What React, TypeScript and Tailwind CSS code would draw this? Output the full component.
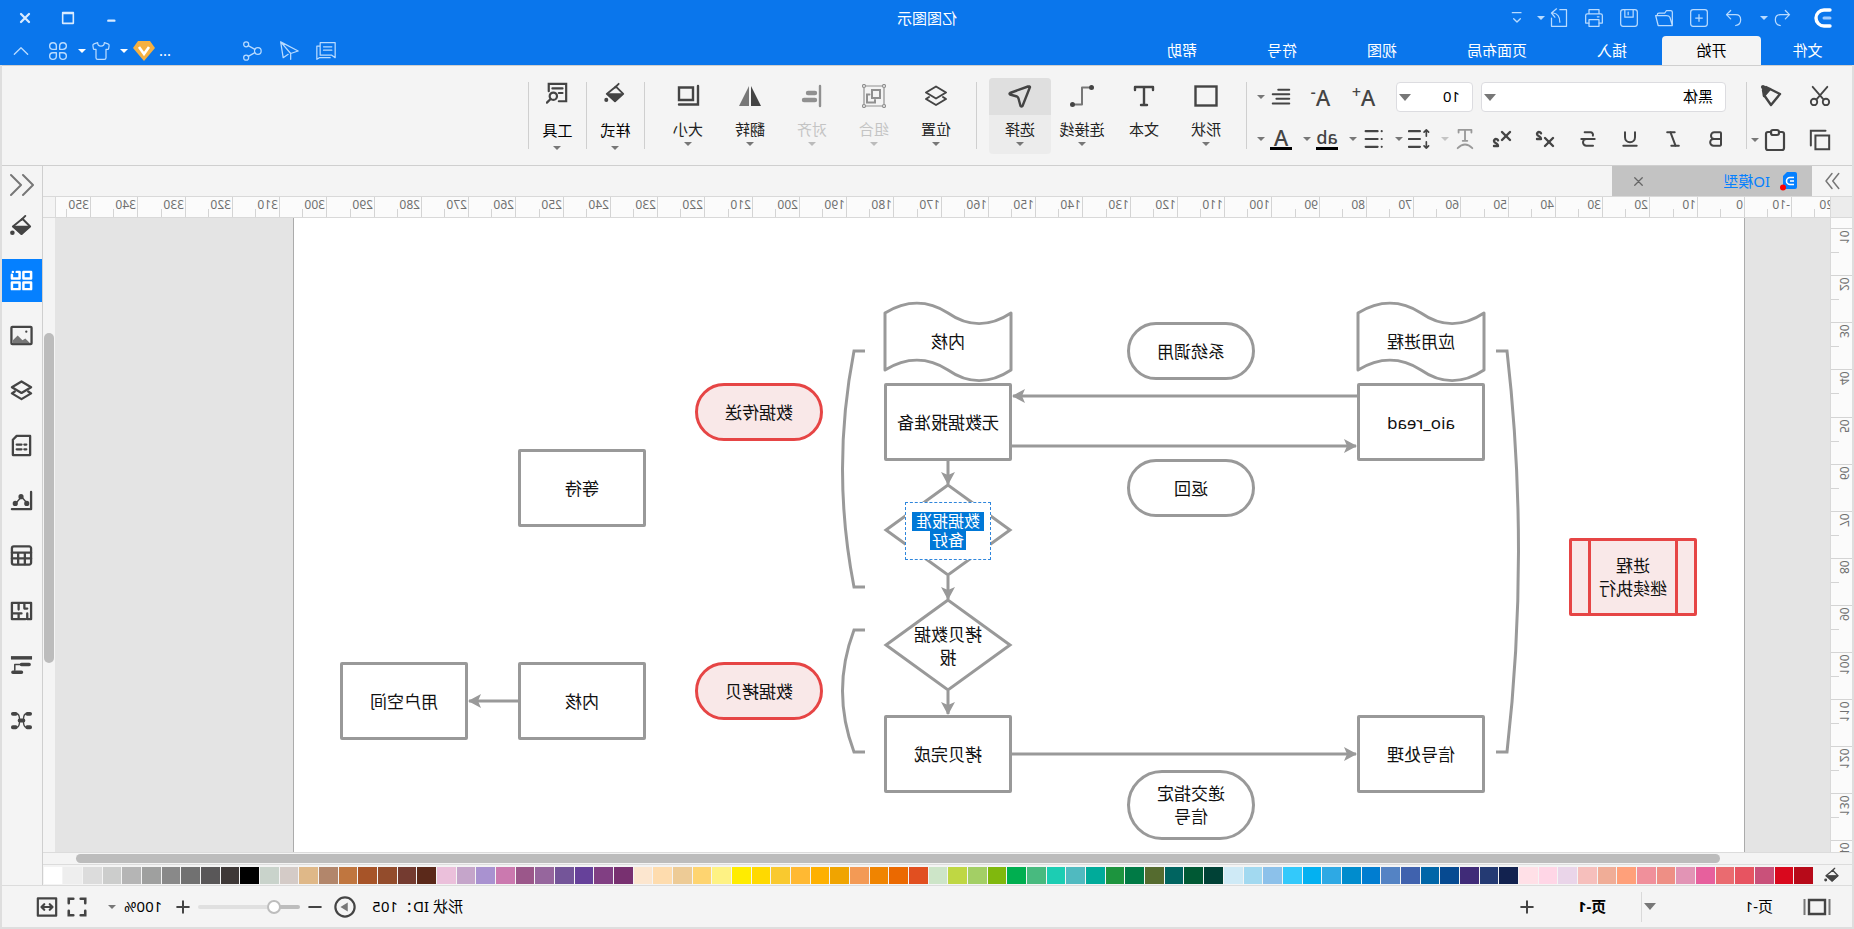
import type { ReactNode } from 'react';
import { Bold, Italic, Shirt, Strikethrough, Subscript, Superscript, Underline } from 'lucide-react';
import clsx from 'clsx';

interface IconProps {
  children: ReactNode;
  className?: string;
  stroke?: number;
}

const Icon = ({ children, className = 'h-6 w-6', stroke = 2 }: IconProps) => (
  <svg
    viewBox="0 0 24 24"
    className={clsx('shrink-0', className)}
    fill="none"
    stroke="currentColor"
    strokeWidth={stroke}
    strokeLinecap="round"
    strokeLinejoin="round"
    aria-hidden
  >
    {children}
  </svg>
);

const Caret = ({ className = 'h-1 w-2' }: { className?: string }) => (
  <svg viewBox="0 0 8 4" className={clsx('shrink-0', className)} preserveAspectRatio="none" aria-hidden>
    <path d="M0 0h8L4 4z" fill="currentColor" />
  </svg>
);

const Separator = () => <div className="h-[67px] w-px bg-[#cfcfcf]" />;

const bucket = (
  <>
    <path d="m11 5-8 8 9 8 9-8z" strokeWidth="2" />
    <path d="M4 13h16l-8 8z" fill="currentColor" strokeWidth="1.500" />
    <path d="m12 6-4-4" strokeWidth="2" />
    <circle cx="21.500" cy="19.500" r="1.200" fill="currentColor" />
  </>
);

const layers = (
  <>
    <path d="M12 2.500 22 8.500l-10 6-10-6z" />
    <path d="m5 13-3 2 10 6 10-6-3-2" />
  </>
);

const Header = () => {
  const quickActions = [
    {
      label: '新建',
      icon: (
        <>
          <rect x="2" y="2" width="20" height="20" rx="3" />
          <path d="M12 8v8M8 12h8" />
        </>
      )
    },
    {
      label: '打开',
      icon: <path d="M2 21V5q0-2 2-2h5l2 3h7q2 0 2 2v1M2 21h17l3-12H9q-3 0-4 2z" />
    },
    {
      label: '保存',
      icon: (
        <>
          <rect x="2" y="2" width="20" height="20" rx="3" />
          <path d="M7 2v9h10V2M13 5v3" />
        </>
      )
    },
    {
      label: '打印',
      icon: (
        <>
          <path d="M6 7V2h12v5M6 18H2V9q0-2 2-2h16q2 0 2 2v9h-4" />
          <path d="M6 14h12v8H6zM6 10.500h2" />
        </>
      )
    },
    {
      label: '导出',
      icon: <path d="M11 2H3v20h18V12M11 17q0-10 8-11M15 1l6 5-4 5" />
    }
  ];

  const tabs = ['插入', '页面布局', '视图', '符号', '帮助'];

  return (
    <header className="bg-[#0a76ec] text-white">
      <div className="grid h-9 grid-cols-[1fr_auto_1fr] items-center">
        <div className="flex items-center pl-[22px] text-[#b9dbff]">
          <svg viewBox="0 0 18 20" className="h-5 w-[18px]" fill="none" stroke="white" strokeLinecap="round" aria-hidden>
            <path d="M2 2h6a8 8 0 0 1 0 16H2" strokeWidth="3.400" />
            <path d="M2 10h6" strokeWidth="3" stroke="#9fcbff" />
          </svg>
          <button type="button" aria-label="撤销" className="ml-[22px]">
            <Icon className="h-5 w-5" stroke={1.5}>
              <path d="m8 3-5 5 5 5M3 8h11q6 0 6 6t-6 7" />
            </Icon>
          </button>
          <button type="button" aria-label="撤销记录" className="ml-1">
            <Caret />
          </button>
          <button type="button" aria-label="恢复" className="ml-4">
            <Icon className="h-5 w-5" stroke={1.5}>
              <path d="m16 3 5 5-5 5M21 8H10q-6 0-6 6t6 7" />
            </Icon>
          </button>
          {quickActions.map((action) => (
            <button key={action.label} type="button" aria-label={action.label} className="ml-[15px]">
              <Icon className="h-5 w-5" stroke={1.5}>
                {action.icon}
              </Icon>
            </button>
          ))}
          <button type="button" aria-label="导出选项" className="ml-1">
            <Caret />
          </button>
          <button type="button" aria-label="自定义工具栏" className="ml-3">
            <Icon className="h-4 w-4">
              <path d="M6 4h13M7 13l5 5 5-5" />
            </Icon>
          </button>
        </div>
        <h1 className="text-[15px]">亿图图示</h1>
        <div className="flex justify-end pr-1 text-[#d9ebff]">
          <button type="button" aria-label="最小化" className="flex w-[43px] justify-center">
            <Icon className="h-4 w-4" stroke={3.6}>
              <path d="M7 16h9" />
            </Icon>
          </button>
          <button type="button" aria-label="最大化" className="flex w-[43px] justify-center">
            <Icon className="h-4 w-4" stroke={2.4}>
              <path d="M4 4h16v16H4zM4 5h16" />
            </Icon>
          </button>
          <button type="button" aria-label="关闭" className="flex w-[43px] justify-center">
            <Icon className="h-4 w-4" stroke={3.4}>
              <path d="m6 6 12 12M18 6 6 18" />
            </Icon>
          </button>
        </div>
      </div>

      <div className="flex h-[29px] items-center justify-between">
        <nav className="flex h-full text-[15px]">
          <button type="button" className="w-[93px]">
            文件
          </button>
          <button type="button" className="w-[99px] rounded-t-sm bg-[#f4f4f4] text-black">
            开始
          </button>
          {tabs.map((tab) => (
            <button key={tab} type="button" className="px-[35px]">
              {tab}
            </button>
          ))}
        </nav>
        <div className="flex items-center pr-[13px] text-[#b9dbff]">
          <button type="button" aria-label="评论">
            <Icon className="h-5 w-5" stroke={1.5}>
              <path d="M1 2h18v15H5l-4 3zM19 6h4v16l-3-2H7M5 7h10M5 11h10" />
            </Icon>
          </button>
          <button type="button" aria-label="发送" className="ml-[17px]">
            <Icon className="h-5 w-5" stroke={1.5}>
              <path d="M22 1 1 12l9 3v7M22 1l-3 19-6-4M22 1 10 15" />
            </Icon>
          </button>
          <button type="button" aria-label="分享" className="ml-[17px]">
            <Icon className="h-5 w-5" stroke={1.5}>
              <circle cx="5" cy="12" r="4" />
              <circle cx="19" cy="4" r="3" />
              <circle cx="19" cy="20" r="3" />
              <path d="m8.500 10 8-4.500M8.500 14l8 4.500" />
            </Icon>
          </button>
          <span className="ml-[71px] w-3 text-[15px] text-white">...</span>
          <svg viewBox="0 0 22 20" className="ml-1 h-5 w-[22px]" aria-hidden>
            <path d="M5 0h12l5 7-11 13L0 7z" fill="#f5b041" />
            <path d="m6 6 5 7 5-7" fill="none" stroke="white" strokeWidth="2.600" />
          </svg>
          <button type="button" aria-label="会员选项" className="ml-[5px] text-white">
            <Caret />
          </button>
          <button type="button" aria-label="主题" className="ml-[9px]">
            <Shirt className="h-5 w-5" strokeWidth={1.5} aria-hidden />
          </button>
          <button type="button" aria-label="主题选项" className="ml-[5px] text-white">
            <Caret />
          </button>
          <button type="button" aria-label="应用" className="ml-[10px]">
            <Icon className="h-5 w-5" stroke={1.7}>
              <path d="M10 10H6a4 4 0 1 1 4-4zM14 10h4a4 4 0 1 0-4-4zM10 14H6a4 4 0 1 0 4 4zM14 14h4a4 4 0 1 1-4 4z" />
            </Icon>
          </button>
          <button type="button" aria-label="收起功能区" className="ml-[19px]">
            <Icon className="h-4 w-4">
              <path d="m2 17 10-10 10 10" />
            </Icon>
          </button>
        </div>
      </div>
    </header>
  );
};

interface BigTool {
  label: string;
  icon: ReactNode;
  caret?: boolean;
  active?: boolean;
  disabled?: boolean;
}

const drawTools: BigTool[] = [
  {
    label: '形状',
    caret: true,
    icon: <rect x="1.500" y="2.500" width="21" height="19" strokeLinejoin="miter" strokeWidth="2.400" />
  },
  { label: '文本', icon: <path d="M3 6V3h18v3M12 3v18M9 21h6" strokeWidth="2.400" /> },
  {
    label: '连接线',
    caret: true,
    icon: (
      <>
        <path d="M5 3.500h7v17h7" stroke="#777" />
        <circle cx="2.500" cy="3.500" r="2.500" fill="currentColor" stroke="none" />
        <circle cx="21.500" cy="20.500" r="2.500" fill="currentColor" stroke="none" />
      </>
    )
  },
  {
    label: '选择',
    caret: true,
    active: true,
    icon: (
      <path d="M2 3q0-1 2-.5L22 9q1 .5 0 1.500l-7 2q-1 .5-1.500 2l-2 7.500q-1 1-2 0z" strokeWidth="2.400" />
    )
  }
];

const arrangeTools: BigTool[] = [
  { label: '位置', caret: true, icon: layers },
  {
    label: '组合',
    caret: true,
    disabled: true,
    icon: (
      <>
        <path d="M2 2h20v20H2z" strokeWidth="1.200" />
        <path d="M6 6h8v8H6zM16.500 10.500H19v8h-8V16" strokeLinejoin="miter" />
        <g fill="#f4f4f4" strokeWidth="1.200">
          <circle cx="2" cy="2" r="1.500" />
          <circle cx="22" cy="2" r="1.500" />
          <circle cx="2" cy="22" r="1.500" />
          <circle cx="22" cy="22" r="1.500" />
        </g>
      </>
    )
  },
  {
    label: '对齐',
    caret: true,
    disabled: true,
    icon: (
      <>
        <path d="M4 2v20" strokeWidth="2.400" />
        <path d="M9 9h7M9 16h11" strokeWidth="4.400" />
      </>
    )
  },
  {
    label: '翻转',
    caret: true,
    icon: (
      <>
        <path d="M11 2v20H1z" fill="currentColor" stroke="none" />
        <path d="M13 2v20h10z" fill="#777" stroke="none" />
      </>
    )
  },
  {
    label: '大小',
    caret: true,
    icon: <path d="M2 2v18.500h19M7 3.500h14v12.500H7z" strokeLinejoin="miter" strokeWidth="2.400" />
  }
];

const BigButton = ({ tool }: { tool: BigTool }) => (
  <button
    type="button"
    disabled={tool.disabled}
    className={clsx(
      'flex h-[76px] w-[62px] flex-col items-center rounded-sm text-[15px] text-[#222] disabled:text-[#c4c4c4]',
      tool.active && 'bg-[#ececec]'
    )}
  >
    <span
      className={clsx(
        'flex h-[37px] w-full shrink-0 items-center justify-center rounded-t-sm',
        tool.active && 'bg-[#dfdfdf]',
        tool.disabled ? 'text-[#909090]' : 'text-[#444]'
      )}
    >
      <Icon>{tool.icon}</Icon>
    </span>
    <span className="pt-[2px] leading-6">{tool.label}</span>
    {tool.caret && <Caret className={clsx('mt-px h-1 w-2', tool.disabled ? 'text-[#bbb]' : 'text-[#777]')} />}
  </button>
);

const Combo = ({ label, children, disabled }: { label: string; children: ReactNode; disabled?: boolean }) => (
  <button
    type="button"
    aria-label={label}
    disabled={disabled}
    className="flex w-[46px] shrink-0 items-center gap-1 disabled:text-[#999]"
  >
    <span className="flex w-6 justify-center">{children}</span>
    <Caret className={clsx('h-1 w-2', disabled ? 'text-[#c4c4c4]' : 'text-[#777]')} />
  </button>
);

const Ribbon = () => {
  const textStyles = [
    { label: '加粗', Glyph: Bold, size: 'h-5 w-5' },
    { label: '斜体', Glyph: Italic, size: 'h-5 w-5' },
    { label: '下划线', Glyph: Underline, size: 'h-5 w-5' },
    { label: '删除线', Glyph: Strikethrough, size: 'h-5 w-5' },
    { label: '上标', Glyph: Superscript, size: 'h-6 w-6' },
    { label: '下标', Glyph: Subscript, size: 'h-6 w-6' }
  ];

  return (
    <section
      aria-label="开始"
      className="flex h-[101px] shrink-0 items-center border-y border-[#cfcfcf] text-[#444]"
    >
      <div className="ml-[7px] grid w-[98px] grid-cols-2 items-center gap-y-5 pt-1">
        <button type="button" aria-label="剪切" className="flex justify-center">
          <Icon className="h-[22px] w-[22px]">
            <path d="m4 2 12 14M20 2 8 16" />
            <circle cx="5.500" cy="18.500" r="3.500" />
            <circle cx="18.500" cy="18.500" r="3.500" />
          </Icon>
        </button>
        <button type="button" aria-label="格式刷" className="flex justify-center">
          <Icon className="h-6 w-6" stroke={2.4}>
            <path d="M3 10 13 5l6 6-7 10z" />
            <path d="m13 5 4-2 3 3-1 6z" fill="currentColor" />
            <path d="m18 5 2-2" strokeWidth="4" />
          </Icon>
        </button>
        <button type="button" aria-label="复制" className="flex justify-center">
          <Icon className="h-[22px] w-[22px]" stroke={2.2}>
            <path d="M2 7h15v15H2zM6 2h16v16" strokeLinejoin="miter" />
          </Icon>
        </button>
        <button type="button" aria-label="粘贴" className="flex items-center gap-1 pl-[9px]">
          <Icon className="h-6 w-6" stroke={2.2}>
            <path d="M8 4H5q-2 0-2 2v14q0 2 2 2h14q2 0 2-2V6q0-2-2-2h-3" />
            <rect x="8" y="2" width="8" height="5" rx="2" />
          </Icon>
          <Caret className="h-1 w-2 text-[#777]" />
        </button>
      </div>
      <Separator />

      <div className="flex w-[499px] flex-col gap-3 pt-1">
        <div className="flex h-[30px] items-center pl-5">
          <div className="relative">
            <select
              aria-label="字体"
              className="block h-[30px] w-[245px] appearance-none rounded-sm border border-[#dcdce0] bg-white pl-3 text-[15px] text-black"
            >
              <option>黑体</option>
            </select>
            <Caret className="pointer-events-none absolute top-3 right-[3px] h-[7px] w-3 text-[#777]" />
          </div>
          <div className="relative ml-2">
            <select
              aria-label="字号"
              className="block h-[30px] w-[77px] appearance-none rounded-sm border border-[#dcdce0] bg-white pl-3 text-[15px] text-black"
            >
              <option>10</option>
            </select>
            <Caret className="pointer-events-none absolute top-3 right-[3px] h-[7px] w-3 text-[#777]" />
          </div>
          <button type="button" aria-label="增大字号" className="ml-[11px] flex w-11 justify-center text-[22px] leading-[30px] font-medium">
            A<span className="text-base leading-5">+</span>
          </button>
          <button type="button" aria-label="减小字号" className="mr-[6px] flex w-11 justify-center text-[22px] leading-[30px] font-medium">
            A<span className="text-base leading-5">-</span>
          </button>
          <Combo label="对齐方式">
            <Icon className="h-[22px] w-[22px]" stroke={2.2}>
              <path d="M3 4h12M3 9h18M3 14h14M3 19h18" />
            </Icon>
          </Combo>
        </div>

        <div className="flex h-[30px] items-center pl-[9px]">
          {textStyles.map(({ label, Glyph, size }) => (
            <button key={label} type="button" aria-label={label} className="flex w-[43px] justify-center">
              <Glyph className={size} strokeWidth={2.4} aria-hidden />
            </button>
          ))}
          <div className="ml-1 flex items-center">
            <Combo label="清除格式" disabled>
              <Icon className="h-[22px] w-[22px]">
                <path d="M5 5V2h14v3M12 2v12M9.500 14h5M4 22q8-8 16 0" />
              </Icon>
            </Combo>
            <Combo label="行距">
              <Icon className="h-[22px] w-[22px]">
                <path d="M11 3.500h12M11 12h12M11 20.500h12" strokeWidth="2.400" />
                <path d="M4 2v7M1.500 4.500 4 2l2.500 2.500M4 15v7M1.500 19.500 4 22l2.500-2.500" strokeWidth="1.800" />
              </Icon>
            </Combo>
            <Combo label="项目符号">
              <Icon className="h-[22px] w-[22px]" stroke={2.4}>
                <path d="M7 3.500h13M7 12h13M7 20.500h13M2.500 3.500v0M2.500 12v0M2.500 20.500v0" />
              </Icon>
            </Combo>
            <Combo label="突出显示">
              <span className="flex w-[22px] justify-center border-b-3 border-black text-lg leading-5 font-medium">
                ab
              </span>
            </Combo>
            <Combo label="字体颜色">
              <span className="flex w-[22px] justify-center border-b-3 border-black text-[22px] leading-5 font-medium">
                A
              </span>
            </Combo>
          </div>
        </div>
      </div>
      <Separator />

      <div className="flex pr-3 pl-[9px]">
        {drawTools.map((tool) => (
          <BigButton key={tool.label} tool={tool} />
        ))}
      </div>
      <Separator />
      <div className="flex pr-3 pl-[9px]">
        {arrangeTools.map((tool) => (
          <BigButton key={tool.label} tool={tool} />
        ))}
      </div>
      <Separator />
      <button type="button" className="flex w-[57px] flex-col items-center text-[15px] text-black">
        <Icon className="h-[22px] w-[22px] text-[#444]">{bucket}</Icon>
        <span className="pt-[14px] leading-6">样式</span>
        <Caret className="mt-1 h-1 w-2 text-[#777]" />
      </button>
      <Separator />
      <button type="button" className="flex w-[57px] flex-col items-center text-[15px] text-black">
        <Icon className="h-[22px] w-[22px] text-[#444]" stroke={2.4}>
          <path d="M10 21H2V2h19v8M6 7h11M6 12h4" strokeLinejoin="miter" />
          <circle cx="16" cy="15.500" r="4" />
          <path d="m19 18.500 4 4" />
        </Icon>
        <span className="pt-[14px] leading-6">工具</span>
        <Caret className="mt-1 h-1 w-2 text-[#777]" />
      </button>
      <Separator />
    </section>
  );
};

const DocumentTabs = () => (
  <div className="flex h-[30px] shrink-0 items-center">
    <button type="button" aria-label="展开符号库" className="flex w-10 justify-center text-[#777]">
      <Icon className="h-[18px] w-[18px]">
        <path d="m3 2 8 10-8 10M12 2l8 10-8 10" />
      </Icon>
    </button>
    <div className="flex h-full w-[200px] items-center bg-[#c3c3c3] pr-[22px] pl-[14px]">
      <svg viewBox="0 0 18 20" className="h-5 w-[18px]" aria-hidden>
        <path d="M1 3q0-2 2-2h8l4 4v11q0 2-2 2H3q-2 0-2-2z" fill="#0580ff" />
        <path d="M4 6.500h4a3.500 3.500 0 0 1 0 7H4M4 10h4" fill="none" stroke="white" strokeWidth="1.600" />
        <circle cx="15" cy="16.500" r="3" fill="#f00" />
      </svg>
      <span className="ml-[10px] text-[15px] text-[#0580ff]">IO模型</span>
      <button type="button" aria-label="关闭标签" className="ml-auto text-[#666]">
        <Icon className="h-[9px] w-[9px]" stroke={3.4}>
          <path d="m2 2 20 20M22 2 2 22" />
        </Icon>
      </button>
    </div>
  </div>
);

const STEP = 47.25;
const columns = Array.from({ length: 38 }, (_, index) => index - 2);
const rows = Array.from({ length: 14 }, (_, index) => index + 1);

const TopRuler = () => (
  <div className="flex h-[22px] shrink-0 border-y border-[#d9d9d9] bg-[#f4f4f4]">
    <div className="w-[22px] shrink-0 border-r border-[#d9d9d9] bg-[#ececec]" />
    <div className="relative flex-1 overflow-hidden border-r border-[#d9d9d9] bg-[#fbfbfb] text-xs leading-4 text-[#707070]">
      {columns.map((column) => (
        <div
          key={column}
          className="absolute top-0 flex h-full items-end border-l border-[#d4d4d4]"
          style={{ left: Math.round(85 + column * STEP) }}
        >
          <span className="w-[23px] self-start pl-px">{column * 10}</span>
          <span className="h-2 w-px bg-[#d4d4d4]" />
        </div>
      ))}
    </div>
    <div className="w-3 shrink-0" />
  </div>
);

const SideRuler = () => (
  <div className="relative w-[22px] shrink-0 overflow-hidden border-r border-[#d9d9d9] bg-[#fbfbfb] text-xs leading-4 text-[#707070]">
    {rows.map((row) => (
      <div
        key={row}
        className="absolute left-0 flex w-full flex-col items-end border-t border-[#d4d4d4]"
        style={{ top: Math.round(row * 47.1 - 37) }}
      >
        <span className="h-[23px] rotate-180 self-start pb-px text-right [writing-mode:vertical-rl]">
          {row * 10}
        </span>
        <span className="h-px w-2 bg-[#d4d4d4]" />
      </div>
    ))}
  </div>
);

interface DiagramNode {
  id: string;
  text: string;
  shape: 'box' | 'pill' | 'plain' | 'redBox' | 'redPill';
  place: string;
}

const shapeStyles = {
  box: 'rounded-[2px] border-3 border-[#999]',
  pill: 'rounded-full border-3 border-[#999]',
  plain: '',
  redBox: 'rounded-[2px] border-3 border-[#e64545] bg-[#f9e8e8]',
  redPill: 'rounded-full border-3 border-[#e64545] bg-[#f9e8e8]'
} as const;

const nodes: DiagramNode[] = [
  { id: 'app', text: '应用进程', shape: 'plain', place: 'left-[259px] top-[83px] h-[80px]' },
  { id: 'read', text: 'aio_read', shape: 'box', place: 'left-[259px] top-[165px] h-[78px]' },
  { id: 'handler', text: '信号处理', shape: 'box', place: 'left-[259px] top-[497px] h-[78px]' },
  { id: 'syscall', text: '系统调用', shape: 'pill', place: 'left-[489px] top-[104px] h-[58px]' },
  { id: 'return', text: '返回', shape: 'pill', place: 'left-[489px] top-[241px] h-[58px]' },
  { id: 'signal', text: '递交指定\n信号', shape: 'pill', place: 'left-[489px] top-[552px] h-[70px]' },
  { id: 'kernel', text: '内核', shape: 'plain', place: 'left-[732px] top-[83px] h-[80px]' },
  { id: 'notReady', text: '无数据报准备', shape: 'box', place: 'left-[732px] top-[165px] h-[78px]' },
  { id: 'copy', text: '拷贝数据\n报', shape: 'plain', place: 'left-[732px] top-[382px] h-[92px]' },
  { id: 'done', text: '拷贝完成', shape: 'box', place: 'left-[732px] top-[497px] h-[78px]' },
  { id: 'process', text: '进程\n继续执行', shape: 'redBox', place: 'left-[47px] top-[320px] h-[78px]' },
  { id: 'transfer', text: '数据传送', shape: 'redPill', place: 'left-[921px] top-[165px] h-[58px]' },
  { id: 'dataCopy', text: '数据拷贝', shape: 'redPill', place: 'left-[921px] top-[444px] h-[58px]' },
  { id: 'wait', text: '等待', shape: 'box', place: 'left-[1098px] top-[231px] h-[78px]' },
  { id: 'kernelCopy', text: '内核', shape: 'box', place: 'left-[1098px] top-[444px] h-[78px]' },
  { id: 'userSpace', text: '用户空间', shape: 'box', place: 'left-[1276px] top-[444px] h-[78px]' }
];

const wave = 'M0 9C21 23 43 23 63 9C83-4 105-4 126 9V66C105 53 83 53 63 66C43 80 21 80 0 66Z';

const connectors = [
  'M387 178h344',
  'M732 228H388',
  'M732 536H388',
  'M796 243v23',
  'M796 358v23',
  'M796 473v23',
  'M1226 483h49'
];

const Page = () => (
  <div className="relative ml-[85px] h-full w-[1452px] shrink-0 border-x border-[#ababab] bg-white">
    <svg className="absolute inset-0 h-full w-full" fill="none" stroke="#999" strokeWidth="3" aria-hidden>
      <defs>
        <marker
          id="arrow"
          viewBox="0 0 13 14"
          refX="12"
          refY="7"
          markerWidth="13"
          markerHeight="14"
          markerUnits="userSpaceOnUse"
          orient="auto"
        >
          <path d="M0 0 13 7 0 14 3 7z" fill="#999" stroke="none" />
        </marker>
      </defs>
      <path d={wave} transform="translate(260 86)" strokeLinejoin="round" />
      <path d={wave} transform="translate(733 86)" strokeLinejoin="round" />
      <path d="M796 267l62 45-62 45-62-45zM796 382l62 45-62 45-62-45z" />
      <path d="M248 133h-11q-23 200 0 401h11M879 133h11q23 118 0 236h-11M879 412h11q23 61 0 122h-11" />
      {connectors.map((connector) => (
        <path key={connector} d={connector} markerEnd="url(#arrow)" />
      ))}
    </svg>
    {nodes.map((node) => (
      <div
        key={node.id}
        className={clsx(
          'absolute flex w-32 items-center justify-center text-center text-[17px] leading-[23px] whitespace-pre text-[#111]',
          shapeStyles[node.shape],
          node.place
        )}
      >
        {node.shape === 'redBox' ? (
          <span className="mx-4 flex h-full flex-1 items-center justify-center border-x-3 border-[#e64545]">
            {node.text}
          </span>
        ) : (
          node.text
        )}
      </div>
    ))}
    <div className="absolute top-[284px] left-[753px] flex h-[58px] w-[86px] flex-col items-center justify-center border border-dashed border-[#2f86dc] bg-white text-base leading-[19px] text-white">
      <span className="bg-[#0078d7] px-1">数据报准</span>
      <span className="bg-[#0078d7] px-[2px]">备好</span>
    </div>
  </div>
);

const palette = [
  '#b70a19', '#d9081d', '#c9517a', '#e75461', '#ea6b70', '#e7609d', '#e294b5', '#ee8f85', '#f0909b', '#ffa07a',
  '#f0ad97', '#f6bfbc', '#ead5e9', '#ffd6e6', '#ffe0e7', '#12224f', '#243a73', '#402b78', '#064a91', '#0066a8',
  '#4062ae', '#5483c4', '#007dd0', '#008ccd', '#2ea9e4', '#03b1f1', '#33c9fb', '#8cc1ea', '#a2d9f0', '#cfeaf6',
  '#004136', '#005934', '#006460', '#556b2f', '#007a45', '#1d943e', '#00ab9a', '#50bac0', '#1ccdb3', '#48ba7f',
  '#00af50', '#80b80d', '#a3cf65', '#bfd743', '#cde5c8', '#e14f20', '#eb6900', '#f08400', '#f39a55', '#f0a400',
  '#feb000', '#ffb933', '#f9c92f', '#ffd900', '#ffec00', '#fef284', '#fed470', '#edcb96', '#fedcae', '#fce6cf',
  '#783070', '#813f83', '#66419a', '#745599', '#96669d', '#9b578a', '#cb79af', '#a992d0', '#c5a5ca', '#ebc0db',
  '#5b291a', '#743b30', '#934c2c', '#a75428', '#c0763f', '#b2866b', '#dfb888', '#d4cbc7', '#c9d3cb', '#000000',
  '#3e3837', '#595758', '#717171', '#898989', '#9fa09f', '#b5b5b5', '#cccdcc', '#dcdcdc', '#eeeeee', '#ffffff'
];

const Palette = () => (
  <div className="flex h-[21px] shrink-0 items-center border-t border-[#dcdcdc] text-[#444]">
    <button type="button" aria-label="填充颜色" className="flex w-[39px] justify-center">
      <Icon className="h-4 w-4">{bucket}</Icon>
    </button>
    <div className="flex h-[17px] flex-1 gap-px">
      {palette.map((color) => (
        <button
          key={color}
          type="button"
          aria-label={color}
          className="h-full flex-1"
          style={{ backgroundColor: color }}
        />
      ))}
    </div>
  </div>
);

const sideTools = [
  { label: '填充', icon: bucket },
  {
    label: '符号库',
    active: true,
    icon: (
      <path d="M2 3h8v7H2zM2 14h8v7H2zM14 14h8v7h-8zM17 3h-3v7h8V6M21 3v0" strokeWidth="2.600" />
    )
  },
  {
    label: '图片',
    icon: (
      <>
        <rect x="1.500" y="3" width="21" height="18" rx="1" />
        <path d="m3 20 5-5 3 2 5-5 5 5v3z" fill="#777" stroke="none" />
        <path d="M7 8v0" />
      </>
    )
  },
  { label: '图层', icon: layers },
  { label: '文档', icon: <path d="M3 2h14l4 4v16H3zM7 11h2M12 11h5M7 16h2M12 16h5" /> },
  {
    label: '图表',
    icon: (
      <>
        <path d="M2 3v18h20" />
        <path d="m6 15 6-7 6 7" strokeWidth="1.600" />
        <g fill="currentColor">
          <circle cx="6.500" cy="15" r="1.500" />
          <circle cx="12.500" cy="8" r="1.500" />
          <circle cx="18.500" cy="15" r="1.500" />
        </g>
      </>
    )
  },
  {
    label: '表格',
    icon: (
      <>
        <rect x="2" y="2.500" width="20" height="19" rx="2" />
        <path d="M2 9h20M2 15h20M8.500 9v12M15.500 9v12" />
      </>
    )
  },
  { label: '平面图', icon: <path d="M2 4h13v7M15 4h7v17H8M2 4v17h4v-6M9 4v6H6M12 15h10M15 15v6" /> },
  {
    label: '甘特图',
    icon: (
      <>
        <path d="M1 4h22" strokeWidth="3.600" strokeLinecap="butt" />
        <path d="M4 11h8M12 19h9" strokeWidth="3.600" />
        <path d="M13 11h6v6" strokeWidth="1.600" />
      </>
    )
  },
  {
    label: '思维导图',
    icon: (
      <>
        <path d="M3 5h3M3 19h3M18 5h3M18 19h3M10 12h4" strokeWidth="4" />
        <path d="M7 5q3 0 3 7t-3 7M17 5q-3 0-3 7t3 7" strokeWidth="1.400" />
      </>
    )
  }
];

const SidePanel = () => (
  <aside className="flex w-10 shrink-0 flex-col text-[#444]">
    <button type="button" aria-label="展开面板" className="flex h-[38px] shrink-0 items-center justify-center text-[#777]">
      <Icon>
        <path d="M11 2 1 12l10 10M23 2 13 12l10 10" />
      </Icon>
    </button>
    <div className="flex flex-col gap-3">
      {sideTools.map((tool) => (
        <button
          key={tool.label}
          type="button"
          aria-label={tool.label}
          className={clsx('flex h-[43px] items-center justify-center', tool.active && 'bg-[#0580ff] text-white')}
        >
          <Icon className="h-[23px] w-[23px]" stroke={2.4}>
            {tool.icon}
          </Icon>
        </button>
      ))}
    </div>
  </aside>
);

const StatusBar = () => (
  <footer className="flex h-[42px] shrink-0 items-center justify-between border-t border-[#dcdcdc] text-[15px] text-black">
    <div className="flex items-center">
      <button type="button" aria-label="页面面板" className="ml-[21px] text-[#444]">
        <svg viewBox="0 0 28 18" className="h-[18px] w-7" fill="none" stroke="currentColor" strokeWidth="2" aria-hidden>
          <path d="M6 2h16v14H6z" strokeWidth="2.400" />
          <path d="M1.500 1v16M26.500 1v16" stroke="#777" />
        </svg>
      </button>
      <div className="relative ml-[30px]">
        <select aria-label="页面" className="h-7 w-[131px] appearance-none bg-transparent text-[15px]">
          <option>页-1</option>
        </select>
        <Caret className="pointer-events-none absolute top-[10px] right-[2px] h-[7px] w-3 text-[#777]" />
      </div>
      <div className="h-[30px] w-px bg-[#d9d9d9]" />
      <button type="button" className="w-[98px] font-bold">
        页-1
      </button>
      <button type="button" aria-label="新增页面" className="ml-[9px] text-[#444]">
        <Icon className="h-[14px] w-[14px]" stroke={3.4}>
          <path d="M12 2v20M2 12h20" />
        </Icon>
      </button>
    </div>

    <div className="flex items-center pr-[34px] text-[#444]">
      <span className="mr-4 text-black">形状 ID：105</span>
      <button type="button" aria-label="播放">
        <Icon className="h-[22px] w-[22px]" stroke={2.4}>
          <circle cx="12" cy="12" r="10.500" />
          <path d="M9 7v10l8-5z" fill="#777" stroke="none" />
        </Icon>
      </button>
      <button type="button" aria-label="缩小" className="ml-3">
        <Icon className="h-[14px] w-[14px]" stroke={3.4}>
          <path d="M2 12h20" />
        </Icon>
      </button>
      <input
        type="range"
        aria-label="缩放"
        defaultValue={22}
        className="ml-2 h-1 w-[102px] appearance-none rounded-full bg-[linear-gradient(to_right,#bdbdbd_26%,#e0e0e0_26%)] [&::-webkit-slider-thumb]:h-[14px] [&::-webkit-slider-thumb]:w-[14px] [&::-webkit-slider-thumb]:appearance-none [&::-webkit-slider-thumb]:rounded-full [&::-webkit-slider-thumb]:border-2 [&::-webkit-slider-thumb]:border-[#bdbdbd] [&::-webkit-slider-thumb]:bg-white"
      />
      <button type="button" aria-label="放大" className="ml-2">
        <Icon className="h-[14px] w-[14px]" stroke={3.4}>
          <path d="M12 2v20M2 12h20" />
        </Icon>
      </button>
      <button type="button" className="ml-[14px] flex items-center gap-2 text-black">
        100%
        <Caret className="h-1 w-2 text-[#777]" />
      </button>
      <button type="button" aria-label="全屏" className="ml-5">
        <Icon className="h-[22px] w-[22px]" stroke={2.8}>
          <path d="M3 8V3h5M16 3h5v5M21 16v5h-5M8 21H3v-5" strokeLinejoin="miter" />
        </Icon>
      </button>
      <button type="button" aria-label="适应宽度" className="ml-2">
        <Icon className="h-[22px] w-[22px]" stroke={2.4}>
          <path d="M2 2.500h20v19H2z" />
          <path d="M7 12h10M9 9l-3 3 3 3M15 9l3 3-3 3" />
        </Icon>
      </button>
    </div>
  </footer>
);

const App = () => (
  <div className="flex h-screen -scale-x-100 flex-col overflow-hidden bg-[#f4f4f4] font-['Noto_Sans','Noto_Sans_CJK_SC',sans-serif]">
    <Header />
    <div className="flex min-h-0 flex-1 flex-col border-x-2 border-b-2 border-[#dedede]">
      <Ribbon />
      <div className="flex min-h-0 flex-1">
        <main className="flex min-w-0 flex-1 flex-col border-r border-[#cfcfcf]">
          <DocumentTabs />
          <TopRuler />
          <div className="flex min-h-0 flex-1">
            <SideRuler />
            <div className="flex min-w-0 flex-1 overflow-hidden bg-[#e4e4e4]">
              <Page />
            </div>
            <div className="w-3 shrink-0 px-px pt-[115px]">
              <div className="h-[330px] rounded-full bg-[#bcbcbc]" />
            </div>
          </div>
          <div className="flex h-3 shrink-0 items-center border-t border-[#dcdcdc] pr-[33px] pl-[132px]">
            <div className="h-[9px] flex-1 rounded-full bg-[#bcbcbc]" />
          </div>
          <Palette />
        </main>
        <SidePanel />
      </div>
      <StatusBar />
    </div>
  </div>
);

export default App;
